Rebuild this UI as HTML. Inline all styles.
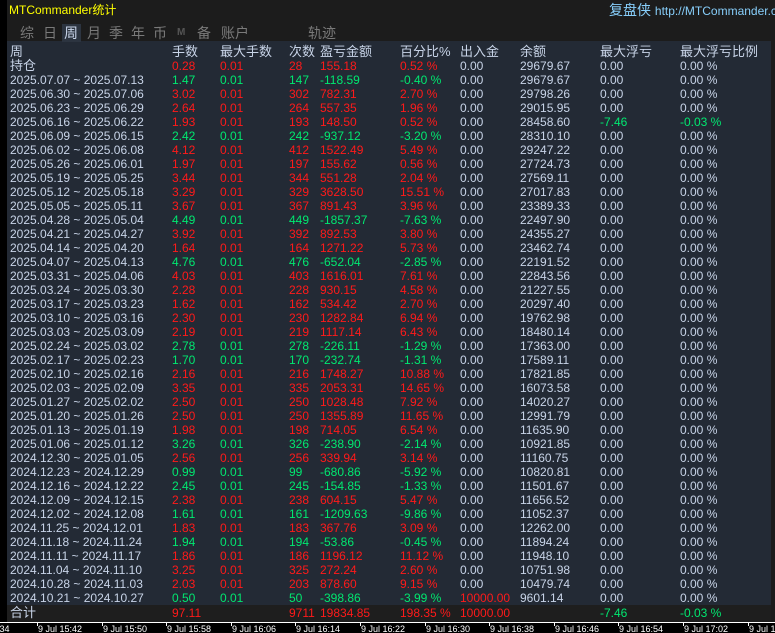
<!DOCTYPE html>
<html><head><meta charset="utf-8"><style>
*{margin:0;padding:0;box-sizing:border-box}
html,body{width:775px;height:633px;overflow:hidden}
body{background:#1c1c1c;position:relative;font-family:"Liberation Sans","Noto Sans CJK SC",sans-serif;font-size:12px;color:#c8d4e8}
.a{position:absolute;white-space:nowrap;line-height:14px}
#panel{position:absolute;left:7px;top:41px;width:764px;height:564px;background:#232a35}
#tot{position:absolute;left:7px;top:605px;width:764px;height:17px;background:#1e1e1e}
#axis{position:absolute;left:0;top:622px;width:775px;height:11px;background:#000;border-top:1px solid #fff;overflow:hidden}
.r{color:#ff1a1a}.g{color:#00e870}
.tab{position:absolute;top:25px;font-size:14px;color:#7a7a7a;line-height:16px}
.ax{position:absolute;top:1px;font-size:9px;color:#fff;line-height:10px;white-space:nowrap}
.tk{position:absolute;top:0;width:1px;height:3px;background:#fff}
</style></head><body>
<div style="position:absolute;left:0;top:0;width:7px;height:633px;background:#000"></div>
<div class="a" style="left:9px;top:3px;color:#ffff00;font-size:12px">MTCommander统计</div>
<div class="a" style="left:609px;top:2px;color:#87cefa;font-size:14px;line-height:16px">复盘侠 <span style="font-size:12px">http://MTCommander.com</span></div>
<div id="panel"></div>
<div style="position:absolute;left:62px;top:24px;width:19px;height:18px;background:#2c3440"></div>
<div class="tab" style="left:20px">综</div><div class="tab" style="left:43px">日</div>
<div class="tab" style="left:64px;color:#c8d4e8">周</div><div class="tab" style="left:87px">月</div>
<div class="tab" style="left:109px">季</div><div class="tab" style="left:131px">年</div>
<div class="tab" style="left:153px">币</div><div class="tab" style="left:177px;font-size:10px;font-weight:bold;color:#555">M</div>
<div class="tab" style="left:197px">备</div><div class="tab" style="left:221px">账户</div>
<div class="tab" style="left:308px">轨迹</div>
<div id="tot"></div>
<div id="axis"></div>
<div id="rows"></div>
<script>
var X=[10,172,220,289,320,400,460,520,600,680];
var H=["周","手数","最大手数","次数","盈亏金额","百分比%","出入金","余额","最大浮亏","最大浮亏比例"];
var out="";
function cell(x,y,t,c,fs){out+='<div class="a '+(c||'')+'" style="left:'+x+'px;top:'+y+'px'+(fs?';font-size:'+fs+'px':'')+'">'+t+'</div>';}
H.forEach(function(h,i){cell(X[i],45,h,'',13)});
cell(10,59,"持仓","",13);
var p=["0.28","0.01","28","155.18","0.52 %","0.00","29679.67","0.00","0.00 %"];
p.forEach(function(v,i){cell(X[i+1],59,v,i<5?'r':'')});
var D=[
["2025.07.07 ~ 2025.07.13","1.47","147","-118.59","-0.40 %","29679.67"],
["2025.06.30 ~ 2025.07.06","3.02","302","782.31","2.70 %","29798.26"],
["2025.06.23 ~ 2025.06.29","2.64","264","557.35","1.96 %","29015.95"],
["2025.06.16 ~ 2025.06.22","1.93","193","148.50","0.52 %","28458.60"],
["2025.06.09 ~ 2025.06.15","2.42","242","-937.12","-3.20 %","28310.10"],
["2025.06.02 ~ 2025.06.08","4.12","412","1522.49","5.49 %","29247.22"],
["2025.05.26 ~ 2025.06.01","1.97","197","155.62","0.56 %","27724.73"],
["2025.05.19 ~ 2025.05.25","3.44","344","551.28","2.04 %","27569.11"],
["2025.05.12 ~ 2025.05.18","3.29","329","3628.50","15.51 %","27017.83"],
["2025.05.05 ~ 2025.05.11","3.67","367","891.43","3.96 %","23389.33"],
["2025.04.28 ~ 2025.05.04","4.49","449","-1857.37","-7.63 %","22497.90"],
["2025.04.21 ~ 2025.04.27","3.92","392","892.53","3.80 %","24355.27"],
["2025.04.14 ~ 2025.04.20","1.64","164","1271.22","5.73 %","23462.74"],
["2025.04.07 ~ 2025.04.13","4.76","476","-652.04","-2.85 %","22191.52"],
["2025.03.31 ~ 2025.04.06","4.03","403","1616.01","7.61 %","22843.56"],
["2025.03.24 ~ 2025.03.30","2.28","228","930.15","4.58 %","21227.55"],
["2025.03.17 ~ 2025.03.23","1.62","162","534.42","2.70 %","20297.40"],
["2025.03.10 ~ 2025.03.16","2.30","230","1282.84","6.94 %","19762.98"],
["2025.03.03 ~ 2025.03.09","2.19","219","1117.14","6.43 %","18480.14"],
["2025.02.24 ~ 2025.03.02","2.78","278","-226.11","-1.29 %","17363.00"],
["2025.02.17 ~ 2025.02.23","1.70","170","-232.74","-1.31 %","17589.11"],
["2025.02.10 ~ 2025.02.16","2.16","216","1748.27","10.88 %","17821.85"],
["2025.02.03 ~ 2025.02.09","3.35","335","2053.31","14.65 %","16073.58"],
["2025.01.27 ~ 2025.02.02","2.50","250","1028.48","7.92 %","14020.27"],
["2025.01.20 ~ 2025.01.26","2.50","250","1355.89","11.65 %","12991.79"],
["2025.01.13 ~ 2025.01.19","1.98","198","714.05","6.54 %","11635.90"],
["2025.01.06 ~ 2025.01.12","3.26","326","-238.90","-2.14 %","10921.85"],
["2024.12.30 ~ 2025.01.05","2.56","256","339.94","3.14 %","11160.75"],
["2024.12.23 ~ 2024.12.29","0.99","99","-680.86","-5.92 %","10820.81"],
["2024.12.16 ~ 2024.12.22","2.45","245","-154.85","-1.33 %","11501.67"],
["2024.12.09 ~ 2024.12.15","2.38","238","604.15","5.47 %","11656.52"],
["2024.12.02 ~ 2024.12.08","1.61","161","-1209.63","-9.86 %","11052.37"],
["2024.11.25 ~ 2024.12.01","1.83","183","367.76","3.09 %","12262.00"],
["2024.11.18 ~ 2024.11.24","1.94","194","-53.86","-0.45 %","11894.24"],
["2024.11.11 ~ 2024.11.17","1.86","186","1196.12","11.12 %","11948.10"],
["2024.11.04 ~ 2024.11.10","3.25","325","272.24","2.60 %","10751.98"],
["2024.10.28 ~ 2024.11.03","2.03","203","878.60","9.15 %","10479.74"],
["2024.10.21 ~ 2024.10.27","0.50","50","-398.86","-3.99 %","9601.14"]];
D.forEach(function(d,k){
 var y=73+k*14, c=d[3].charAt(0)=="-"?"g":"r";
 cell(X[0],y,d[0]);cell(X[1],y,d[1],c);cell(X[2],y,"0.01",c);cell(X[3],y,d[2],c);
 cell(X[4],y,d[3],c);cell(X[5],y,d[4],c);
 var last=k==D.length-1;
 cell(X[6],y,last?"10000.00":"0.00",last?"r":"");
 cell(X[7],y,d[5]);
 if(k==3){cell(X[8],y,"-7.46","g");cell(X[9],y,"-0.03 %","g");}
 else{cell(X[8],y,"0.00");cell(X[9],y,"0.00 %");}
});
var ty=606;
cell(10,ty,"合计","",13);cell(172,ty,"97.11","r");cell(289,ty,"9711","r");cell(320,ty,"19834.85","r");
cell(400,ty,"198.35 %","r");cell(460,ty,"10000.00","r");cell(600,ty,"-7.46","g");cell(680,ty,"-0.03 %","g");
document.getElementById("rows").innerHTML=out;
var ax="";
ax+='<div class="ax" style="left:-8px">5:34</div>';
var t=["15:42","15:50","15:58","16:06","16:14","16:22","16:30","16:38","16:46","16:54","17:02","17:10"];
t.forEach(function(s,i){var x=Math.round(37+i*64.6);ax+='<div class="tk" style="left:'+x+'px"></div><div class="ax" style="left:'+(x+1)+'px">9 Jul '+s+'</div>';});
document.getElementById("axis").innerHTML=ax;
</script>
</body></html>
